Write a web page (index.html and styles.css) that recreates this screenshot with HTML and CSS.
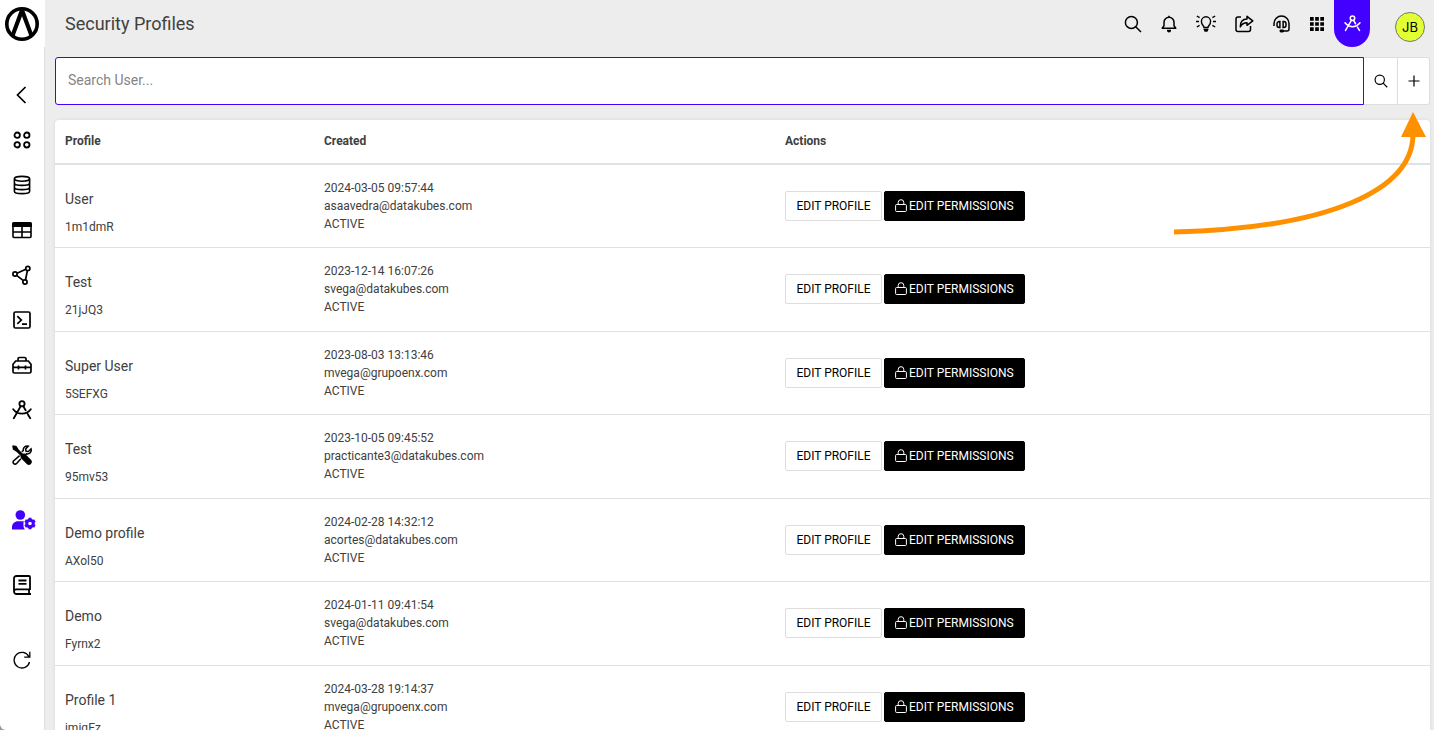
FILE: index.html
```html
<!DOCTYPE html>
<html lang="en">
<head>
<meta charset="utf-8">
<title>Security Profiles</title>
<link rel="stylesheet" href="styles.css">
</head>
<body>
<svg class="defs" aria-hidden="true">
  <symbol id="search" viewBox="0 0 18 18"><g fill="none" stroke="currentColor" stroke-width="1.5"><circle cx="7.4" cy="7.4" r="6"/><path d="M11.7 11.7 17 17"/></g></symbol>
  <symbol id="compass" viewBox="0 0 20 20"><g fill="none" stroke="currentColor" stroke-width="1.8" stroke-linecap="round"><circle cx="10" cy="3.8" r="2.6"/><path d="M8.7 6.3 1.8 18.2M11.3 6.3l2.3 4M15.8 14.2l2.4 4M1.2 9.2c4.4 6 13.2 6 17.6 0"/></g></symbol>
  <symbol id="lock" viewBox="0 0 12 14"><g fill="none" stroke="currentColor"><rect x=".6" y="5.5" width="10.8" height="7" rx="1"/><path d="M3.200 5.500V3.500a2.800 2.800 0 0 1 5.600 0v2"/></g></symbol>
</svg>
<div class="app">
  <header class="topbar">
    <a class="logo" href="#" aria-label="Home"><svg width="36" height="36" viewBox="0 0 36 36"><circle cx="18" cy="18" r="15.2" fill="none" stroke="#000" stroke-width="3.6"/><path d="M16.2 3h3.6l9.7 26.2-3.4 2.6L18 10.2 9.900 31.800l-3.400-2.600z"/></svg></a>
    <h1 class="title">Security Profiles</h1>
    <nav class="tools" aria-label="Tools">
      <button class="tool" aria-label="Search"><svg width="18" height="18"><use href="#search"/></svg></button>
      <button class="tool medium" aria-label="Notifications"><svg width="16" height="18" viewBox="0 0 16 18"><g fill="none" stroke="#000" stroke-width="1.5"><path d="M1.2 13.2h13.6L13 10.8V7.2a5 5 0 0 0-10 0v3.6z" stroke-linejoin="round"/><path d="M8 .8v1.6"/></g><path d="M6 14.8h4v.6a2 2 0 0 1-4 0z"/></svg></button>
      <button class="tool medium" aria-label="Ideas"><svg width="20" height="18" viewBox="0 0 20 18"><g fill="none" stroke="#000" stroke-width="1.4"><path d="M8 12.4c0-1.7-2.6-2.6-2.6-6a4.6 4.6 0 0 1 9.2 0c0 3.4-2.6 4.3-2.6 6z"/><path d="M0 6.5h3M17 6.5h3M.8 1l2.8 1.6M19.200 1l-2.8 1.6M.8 12l2.800-1.600M19.200 12l-2.800-1.600"/></g><path d="M7.600 13.600h4.800v1.200l-1 1.900H8.600l-1-1.900z"/></svg></button>
      <button class="tool wide" aria-label="Share"><svg width="19" height="18" viewBox="0 0 19 18"><g fill="none" stroke="#000" stroke-width="1.5" stroke-linejoin="round"><path d="M6 2H3a2 2 0 0 0-2 2v10.500a2 2 0 0 0 2 2h10.500a2 2 0 0 0 2-2V11"/><path d="M12 1.300 17.800 5.800 12 10.300V7.800C8.500 7.800 6.800 9 5.300 11.800 5.300 7.200 7.500 4 12 4z"/></g></svg></button>
      <button class="tool" aria-label="Support"><svg width="17" height="18" viewBox="0 0 17 18"><g fill="none" stroke="#000" stroke-width="1.500"><path d="M1 11V8.500a7.500 7.500 0 0 1 15 0V14a2 2 0 0 1-2 2h-4"/><path d="M6.900 6.600v5.800H6.200a2.200 2.200 0 0 1-2.200-2.200V8.800a2.200 2.200 0 0 1 2.200-2.200zM10.100 6.600v5.800h.7a2.200 2.200 0 0 0 2.200-2.200V8.800a2.200 2.200 0 0 0-2.200-2.200z"/></g><rect x="6.500" y="14.600" width="4.500" height="2.800" rx="1.400"/></svg></button>
      <button class="tool" aria-label="Apps"><svg width="14" height="14" viewBox="0 0 14 14"><path d="M0 0h3.700v3.700H0zM5.150 0h3.700v3.700h-3.700zM10.300 0H14v3.700h-3.700zM0 5.150h3.700v3.700H0zM5.150 5.150h3.700v3.700h-3.700zM10.300 5.150H14v3.700h-3.700zM0 10.300h3.700V14H0zM5.150 10.300h3.700V14h-3.700zM10.300 10.300H14V14h-3.700z"/></svg></button>
      <button class="tool active" aria-label="Design"><svg width="17" height="17"><use href="#compass"/></svg></button>
    </nav>
    <button class="avatar" aria-label="Account">JB</button>
  </header>
  <nav class="sidebar" aria-label="Main">
    <a class="item" href="#" aria-label="Back"><svg width="20" height="20" viewBox="0 0 20 20"><path d="M13.500 2 5.500 10l8 8" fill="none" stroke="#000" stroke-width="1.700"/></svg></a>
    <a class="item" href="#" aria-label="Dashboard"><svg width="18" height="18" viewBox="0 0 18 18"><g fill="none" stroke="#000" stroke-width="1.800"><circle cx="4.200" cy="4.200" r="2.700"/><circle cx="13.800" cy="4.200" r="2.700"/><circle cx="4.200" cy="13.800" r="2.700"/><circle cx="13.800" cy="13.800" r="2.700"/></g></svg></a>
    <a class="item" href="#" aria-label="Database"><svg width="18" height="20" viewBox="0 0 18 20"><g fill="none" stroke="#000" stroke-width="1.600"><ellipse cx="9" cy="3.800" rx="7.600" ry="2.400"/><path d="M1.400 3.800v12.400c0 1.400 3.400 2.400 7.600 2.400s7.600-1 7.600-2.400V3.800M1.400 8c0 1.400 3.400 2.400 7.600 2.400s7.600-1 7.600-2.400M1.400 12.200c0 1.400 3.400 2.400 7.600 2.400s7.600-1 7.600-2.400"/></g></svg></a>
    <a class="item" href="#" aria-label="Tables"><svg width="20" height="18" viewBox="0 0 20 18"><path d="M0 6V2.500A1.500 1.500 0 0 1 1.500 1h17A1.500 1.500 0 0 1 20 2.500V6z"/><path d="M1 5v10.500a1 1 0 0 0 1 1h16a1 1 0 0 0 1-1V5M10 5v11.500M1 11h18" fill="none" stroke="#000" stroke-width="1.600"/></svg></a>
    <a class="item" href="#" aria-label="Flows"><svg width="20" height="20" viewBox="0 0 20 20"><g fill="none" stroke="#000" stroke-width="1.700"><circle cx="3" cy="9" r="2.100"/><circle cx="15.800" cy="3.400" r="2.100"/><circle cx="13" cy="17" r="2.100"/><path d="m5 8.200 8.800-3.900M4.600 10.400l6.800 5.200M15.400 5.500 13.500 15"/></g></svg></a>
    <a class="item" href="#" aria-label="Console"><svg width="18" height="18" viewBox="0 0 18 18"><g fill="none" stroke="#000" stroke-width="1.700"><rect x="1" y="1" width="16" height="16" rx="1.500"/><path d="m4.300 5.200 4 3.900-4 3.700M9 13.200h5"/></g></svg></a>
    <a class="item" href="#" aria-label="Toolbox"><svg width="20" height="18" viewBox="0 0 20 18"><g fill="none" stroke="#000" stroke-width="1.700"><path d="M1 15.500V8.300L3.700 5h12.600L19 8.300v7.200a1.500 1.500 0 0 1-1.500 1.500h-15A1.500 1.500 0 0 1 1 15.500zM6 5V3a1.500 1.500 0 0 1 1.500-1.500h5A1.500 1.500 0 0 1 14 3v2M1 11.300h18M6.500 9.500v4M13.500 9.500v4"/></g></svg></a>
    <a class="item" href="#" aria-label="Design"><svg width="20" height="20"><use href="#compass"/></svg></a>
    <a class="item" href="#" aria-label="Settings"><svg width="20" height="20" viewBox="0 0 20 20"><path d="M1 .3 4.500 1l2.200 3.500 3.800 3.900 2.200.2 6.500 6.400a3 3 0 0 1-4.200 4.200L8.800 13l-.4-2.500-4-3.800L.9 4.500.2 1z"/><path d="m9.800 6.900 1.500-1.400c-.5-2.700 2-5.200 5-4.400l-2.700 2.800.5 2.300 2.300.3 2.600-2.700c1 3-1.600 5.600-4.500 5l-1.200 1.300M7.600 10.600 1.500 16a2 2 0 0 0 2.900 2.700l4.500-4.900" fill="none" stroke="#000" stroke-width="1.500"/></svg></a>
    <a class="item current" href="#" aria-label="Security profiles"><svg width="24" height="20" viewBox="0 0 24 20"><circle cx="8.300" cy="5" r="4.800"/><path d="M0 19.400v-2.200c0-3.500 2.600-6 6-6h5.700l-.3 3 .2 2.800 1.200 2.400z"/><circle cx="18" cy="13.500" r="3.300" fill="none" stroke="currentColor" stroke-width="3"/><path d="M18 7.800v2.400M18 16.800v2.400M13.100 10.600l2.100 1.200M20.800 15.200l2.100 1.200M13.100 16.400l2.100-1.200M20.800 11.800l2.100-1.200" stroke="currentColor" stroke-width="3"/></svg></a>
    <a class="item gap" href="#" aria-label="Documentation"><svg width="18" height="20" viewBox="0 0 18 20"><g fill="none" stroke="#000" stroke-width="1.800"><path d="M17 15V2a1 1 0 0 0-1-1H3.500A2.500 2.500 0 0 0 1 3.500v13A2.500 2.500 0 0 0 3.500 19H18M17 14.300H3.500A2.300 2.300 0 0 0 1 16.500M16 14.500V19M5.500 5.500h8M5.500 8.800h8"/></g></svg></a>
    <a class="item gap-large" href="#" aria-label="Reload"><svg width="18" height="18" viewBox="0 0 18 18"><path d="M15.800 5.500A7.800 7.800 0 1 0 16.500 11M16.800.8v5.400h-5.600" fill="none" stroke="#000" stroke-width="1.300"/></svg></a>
  </nav>
  <main class="content">
    <form class="searchbar">
      <input class="query" type="text" placeholder="Search User..." aria-label="Search User">
      <button class="square wider" type="button" aria-label="Search"><svg width="14" height="14"><use href="#search"/></svg></button>
      <button class="square last" type="button" aria-label="Add profile"><svg width="12" height="12" viewBox="0 0 12 12"><path d="M6 .5v11M.5 6h11" stroke="#000" stroke-width="1.200"/></svg></button>
    </form>
    <table class="profiles">
      <thead><tr><th class="col-profile">Profile</th><th class="col-created">Created</th><th>Actions</th></tr></thead>
      <tbody>
        <tr><td class="who"><div class="name">User</div><div>1m1dmR</div></td><td><div>2024-03-05 09:57:44</div><div>asaavedra@datakubes.com</div><div>ACTIVE</div></td><td><div class="actions"><button class="btn">EDIT PROFILE</button><button class="btn dark"><svg width="12" height="14"><use href="#lock"/></svg>EDIT PERMISSIONS</button></div></td></tr>
        <tr><td class="who"><div class="name">Test</div><div>21jJQ3</div></td><td><div>2023-12-14 16:07:26</div><div>svega@datakubes.com</div><div>ACTIVE</div></td><td><div class="actions"><button class="btn">EDIT PROFILE</button><button class="btn dark"><svg width="12" height="14"><use href="#lock"/></svg>EDIT PERMISSIONS</button></div></td></tr>
        <tr><td class="who"><div class="name">Super User</div><div>5SEFXG</div></td><td><div>2023-08-03 13:13:46</div><div>mvega@grupoenx.com</div><div>ACTIVE</div></td><td><div class="actions"><button class="btn">EDIT PROFILE</button><button class="btn dark"><svg width="12" height="14"><use href="#lock"/></svg>EDIT PERMISSIONS</button></div></td></tr>
        <tr><td class="who"><div class="name">Test</div><div>95mv53</div></td><td><div>2023-10-05 09:45:52</div><div>practicante3@datakubes.com</div><div>ACTIVE</div></td><td><div class="actions"><button class="btn">EDIT PROFILE</button><button class="btn dark"><svg width="12" height="14"><use href="#lock"/></svg>EDIT PERMISSIONS</button></div></td></tr>
        <tr><td class="who"><div class="name">Demo profile</div><div>AXol50</div></td><td><div>2024-02-28 14:32:12</div><div>acortes@datakubes.com</div><div>ACTIVE</div></td><td><div class="actions"><button class="btn">EDIT PROFILE</button><button class="btn dark"><svg width="12" height="14"><use href="#lock"/></svg>EDIT PERMISSIONS</button></div></td></tr>
        <tr><td class="who"><div class="name">Demo</div><div>Fyrnx2</div></td><td><div>2024-01-11 09:41:54</div><div>svega@datakubes.com</div><div>ACTIVE</div></td><td><div class="actions"><button class="btn">EDIT PROFILE</button><button class="btn dark"><svg width="12" height="14"><use href="#lock"/></svg>EDIT PERMISSIONS</button></div></td></tr>
        <tr><td class="who"><div class="name">Profile 1</div><div>jmiqEz</div></td><td><div>2024-03-28 19:14:37</div><div>mvega@grupoenx.com</div><div>ACTIVE</div></td><td><div class="actions"><button class="btn">EDIT PROFILE</button><button class="btn dark"><svg width="12" height="14"><use href="#lock"/></svg>EDIT PERMISSIONS</button></div></td></tr>
      </tbody>
    </table>
    <svg class="pointer" width="254" height="124" viewBox="0 0 254 124" aria-hidden="true"><path d="M0 120C156 116 239 78 239 22" fill="none" stroke="#ff9100" stroke-width="5"/><path d="m239 0 13 25h-25z" fill="#ff9100"/></svg>
  </main>
</div>
</body>
</html>
```

FILE: styles.css
```css
* { box-sizing: border-box; }
body {
  margin: 0;
  background: #999;
  color: #404040;
  font-family: Roboto, "Liberation Sans", sans-serif;
  font-size: 12px;
}
button, input { font: inherit; margin: 0; }
button { cursor: pointer; padding: 0; border: 0; background: none; color: #000; }
svg { display: block; flex: none; }
.defs { position: absolute; width: 0; height: 0; }

.app {
  display: grid;
  grid-template: 47px minmax(0, 1fr) / 45px minmax(0, 1fr);
  height: 100vh;
  overflow: hidden;
}

.topbar { grid-column: 1 / -1; display: flex; background: #ededed; }
.logo { width: 45px; padding: 6px 4px; background: #fff; }
.title { flex: 1; margin: 0; padding-left: 20px; font-size: 18px; font-weight: 400; line-height: 47px; }
.tools { display: flex; }
.tool { display: flex; align-items: center; justify-content: center; width: 35px; }
.medium { width: 37px; }
.wide { width: 40px; }
.active { width: 36px; background: #4400ff; color: #fff; border-radius: 0 0 18px 18px; }
.avatar {
  width: 30px;
  height: 30px;
  margin: 12px 9px 0 25px;
  border: 1px solid #777;
  border-radius: 50%;
  background: #e1ff32;
  font: 400 13px Inter, sans-serif;
}

.sidebar {
  display: flex;
  flex-direction: column;
  padding: 25px 1px 0 0;
  background: #fff;
  border-right: 1px solid #ddd;
  border-bottom-left-radius: 6px;
}
.item { display: flex; flex: none; align-items: center; justify-content: center; height: 45px; color: #000; }
.current { margin-top: 20px; padding-left: 4px; color: #4400ff; fill: currentColor; }
.gap { margin-top: 20px; }
.gap-large { margin-top: 30px; }

.content { position: relative; padding: 10px 4px 0 10px; background: #ededed; overflow: hidden; }
.searchbar { display: flex; height: 48px; margin-bottom: 15px; }
.query {
  flex: 1;
  min-width: 0;
  padding: 0 12px 2px;
  border: 1px solid #4400ff;
  border-radius: 3px 0 0 3px;
  background: #fff;
  font-size: 14px;
  outline: 0;
}
.query::placeholder { color: #858585; opacity: 1; }
.square {
  display: flex;
  align-items: center;
  justify-content: center;
  width: 32px;
  background: #fff;
  border: 1px solid #ddd;
  border-left: 0;
}
.wider { width: 34px; }
.last { border-radius: 0 3px 3px 0; }

.profiles {
  width: 100%;
  table-layout: fixed;
  border-spacing: 0;
  background: #fff;
  border-radius: 4px 4px 0 0;
  box-shadow: 0 0 4px rgba(0, 0, 0, .08);
}
.col-profile { width: 259px; }
.col-created { width: 461px; }
th { height: 45px; padding: 0 10px 2px; text-align: left; font-weight: 700; border-bottom: 2px solid #dee2e6; }
td { height: 83px; padding: 0 10px; border-bottom: 1px solid #dee0e2; line-height: 18px; }
tr:nth-child(even) td { height: 84px; padding-bottom: 1px; }
.who { vertical-align: top; padding-top: 20px; line-height: 28px; }
.name { font-size: 14px; }
.actions { display: flex; gap: 2px; }
.btn {
  display: flex;
  align-items: center;
  justify-content: center;
  gap: 2px;
  min-width: 97px;
  height: 30px;
  padding: 0 10px;
  border: 1px solid #ddd;
  border-radius: 2px;
  background: #fff;
  white-space: nowrap;
}
.dark { background: #000; border-color: #000; color: #fff; }
.pointer { position: absolute; top: 65px; right: 6px; pointer-events: none; }
```
